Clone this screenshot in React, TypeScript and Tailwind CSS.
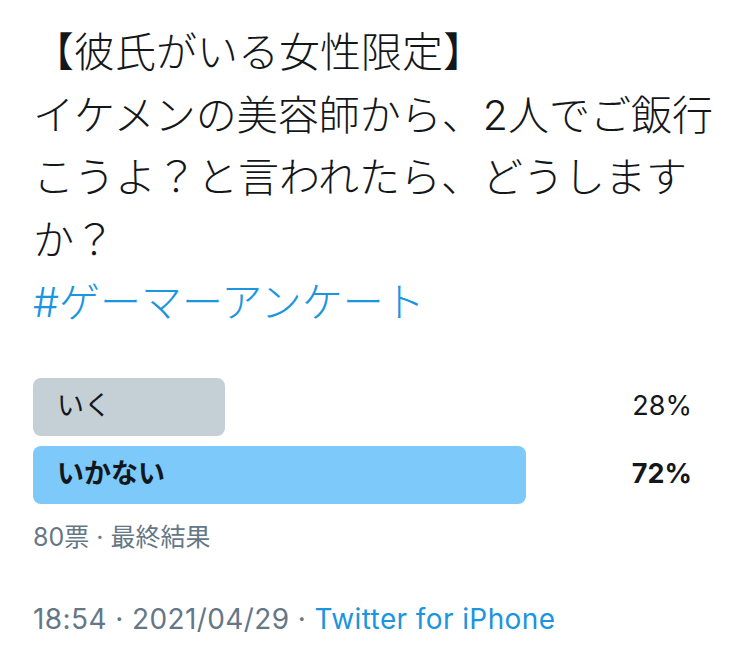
import React from "react";

const latin = { fontFamily: '"Inter", "Noto Sans CJK JP", sans-serif' };

export default function App() {
  return (
    <div
      className="w-[750px] h-[655px] bg-white overflow-hidden px-[33px] pt-[21px] text-[#14171a]"
      style={latin}
    >
      <div className="w-[685px] text-[41px] leading-[62.5px] font-light">
        <div>【彼氏がいる女性限定】</div>
        <div>イケメンの美容師から、2人でご飯行こうよ？と言われたら、どうしますか？</div>
        <div className="text-[#1b95e0]">#ゲーマーアンケート</div>
      </div>

      <div className="mt-[44px] flex flex-col gap-[10px] w-[659px]">
        <div className="flex items-center">
          <div className="w-[192px] h-[58px] rounded-[8px] bg-[#c4cfd6] flex items-center pl-[24px] text-[27px]">
            いく
          </div>
          <span className="ml-auto text-[27px]">28%</span>
        </div>
        <div className="flex items-center">
          <div className="w-[493px] h-[58px] rounded-[8px] bg-[#7dc9fa] flex items-center pl-[24px] text-[27px] font-bold">
            いかない
          </div>
          <span className="ml-auto text-[27px] font-bold">72%</span>
        </div>
      </div>

      <div className="mt-[17px] text-[25px] leading-[32px] text-[#657786]">
        80票 · 最終結果
      </div>

      <div className="mt-[48px] text-[28px] leading-[36px] tracking-[0.4px] text-[#657786]">
        18:54 · 2021/04/29 · <span className="text-[#1b95e0]">Twitter for iPhone</span>
      </div>
    </div>
  );
}
